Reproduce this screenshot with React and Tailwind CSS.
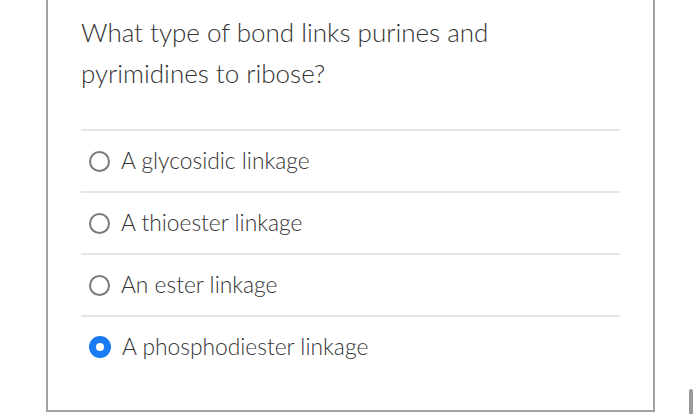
import React from 'react';

const options = [
  { label: 'A glycosidic linkage', checked: false },
  { label: 'A thioester linkage', checked: false },
  { label: 'An ester linkage', checked: false },
  { label: 'A phosphodiester linkage', checked: true },
];

const Radio = ({ checked }) =>
  checked ? (
    <span className="w-[22px] h-[22px] rounded-full bg-[#1a7cf4] flex items-center justify-center shrink-0">
      <span className="w-[8px] h-[8px] rounded-full bg-white" />
    </span>
  ) : (
    <span className="w-[21px] h-[21px] rounded-full border-2 border-[#7a7a7a] bg-white shrink-0" />
  );

export default function App() {
  return (
    <div
      className="relative w-[700px] h-[414px] bg-white overflow-hidden text-[#3a3a3a]"
      style={{ fontFamily: 'Lato, "Open Sans", sans-serif' }}
    >
      <div className="ml-[46px] w-[609px] h-[412px] border-x-2 border-b-2 border-[#a3a3a3] pl-[33px] pr-[33px] pt-[12px]">
        {/* Question */}
        <p className="text-[26px] font-light leading-[41px] text-[#333333]">
          What type of bond links purines and
          <br />
          pyrimidines to ribose?
        </p>

        {/* Answers */}
        <div className="mt-[35px]">
          {options.map((o) => (
            <div key={o.label} className="border-t-2 border-[#e6e6e6] h-[62px] flex items-center gap-[11px] pl-[8px]">
              <Radio checked={o.checked} />
              <span className="text-[22.8px] font-light text-[#333333] -mt-[2px]">{o.label}</span>
            </div>
          ))}
        </div>
      </div>

      {/* scroll indicator */}
      <div className="absolute left-[689px] top-[389px] w-[4px] h-[30px] rounded-full bg-[#9a9a9a]" />
    </div>
  );
}
